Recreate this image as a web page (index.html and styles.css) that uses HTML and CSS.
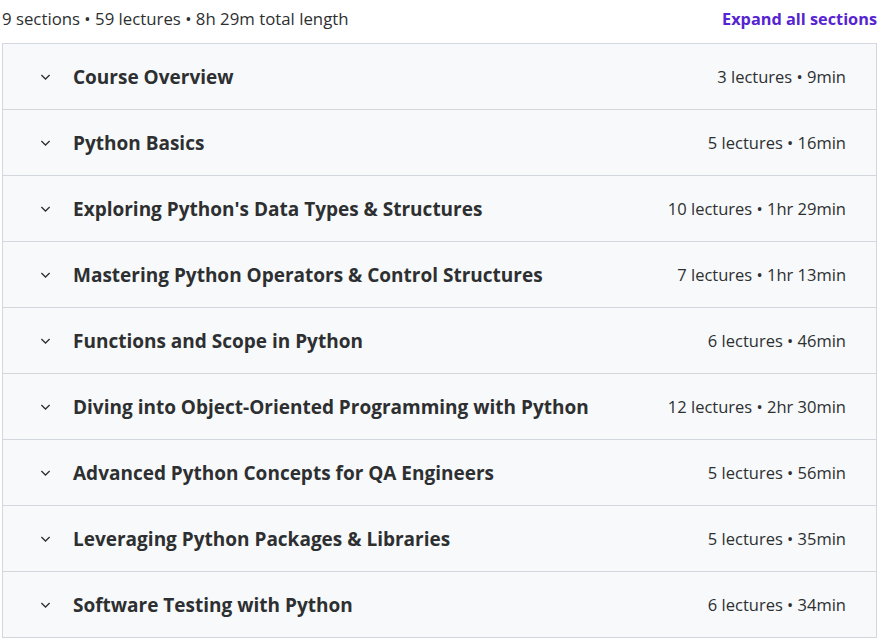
FILE: index.html
```html
<!DOCTYPE html>
<html>
<head>
<meta charset="utf-8">
<link rel="stylesheet" href="styles.css">
</head>
<body>
<div class="curriculum">
  <div class="summary">
    <span class="stats">9 sections • 59 lectures • 8h 29m total length</span>
    <span class="expand">Expand all sections</span>
  </div>
  <div class="sections">
    <div class="row"><svg class="chev" viewBox="0 0 12 8"><path d="M1.5 1.8 6 6.2 10.5 1.8"/></svg><span class="title">Course Overview</span><span class="meta">3 lectures • 9min</span></div>
    <div class="row"><svg class="chev" viewBox="0 0 12 8"><path d="M1.5 1.8 6 6.2 10.5 1.8"/></svg><span class="title">Python Basics</span><span class="meta">5 lectures • 16min</span></div>
    <div class="row"><svg class="chev" viewBox="0 0 12 8"><path d="M1.5 1.8 6 6.2 10.5 1.8"/></svg><span class="title">Exploring Python's Data Types &amp; Structures</span><span class="meta">10 lectures • 1hr 29min</span></div>
    <div class="row"><svg class="chev" viewBox="0 0 12 8"><path d="M1.5 1.8 6 6.2 10.5 1.8"/></svg><span class="title">Mastering Python Operators &amp; Control Structures</span><span class="meta">7 lectures • 1hr 13min</span></div>
    <div class="row"><svg class="chev" viewBox="0 0 12 8"><path d="M1.5 1.8 6 6.2 10.5 1.8"/></svg><span class="title">Functions and Scope in Python</span><span class="meta">6 lectures • 46min</span></div>
    <div class="row"><svg class="chev" viewBox="0 0 12 8"><path d="M1.5 1.8 6 6.2 10.5 1.8"/></svg><span class="title">Diving into Object-Oriented Programming with Python</span><span class="meta">12 lectures • 2hr 30min</span></div>
    <div class="row"><svg class="chev" viewBox="0 0 12 8"><path d="M1.5 1.8 6 6.2 10.5 1.8"/></svg><span class="title">Advanced Python Concepts for QA Engineers</span><span class="meta">5 lectures • 56min</span></div>
    <div class="row"><svg class="chev" viewBox="0 0 12 8"><path d="M1.5 1.8 6 6.2 10.5 1.8"/></svg><span class="title">Leveraging Python Packages &amp; Libraries</span><span class="meta">5 lectures • 35min</span></div>
    <div class="row"><svg class="chev" viewBox="0 0 12 8"><path d="M1.5 1.8 6 6.2 10.5 1.8"/></svg><span class="title">Software Testing with Python</span><span class="meta">6 lectures • 34min</span></div>
  </div>
</div>
</body>
</html>
```
FILE: styles.css
```css
html, body {
  margin: 0;
  padding: 0;
  background: #ffffff;
}
body {
  font-family: "Open Sans", "Noto Sans", sans-serif;
  color: #2d2f31;
}
.curriculum {
  margin: 0 2px 0 2px;
}
.summary {
  display: flex;
  justify-content: space-between;
  align-items: center;
  height: 37px;
  padding-bottom: 6px;
}
.stats {
  font-size: 16.8px;
  color: #2d2f31;
}
.expand {
  font-size: 16.3px;
  font-weight: 700;
  color: #5624d0;
}
.sections {
  border: 1px solid #d1d7dc;
  border-bottom: none;
}
.row {
  display: flex;
  align-items: center;
  height: 65px;
  background: #f7f9fa;
  border-bottom: 1px solid #d1d7dc;
  padding: 0 30px 0 37px;
}
.chev {
  width: 11px;
  height: 8px;
  flex: none;
  fill: none;
  stroke: #2d2f31;
  stroke-width: 1.4;
  margin-right: 22px;
}
.title {
  flex: 1;
  font-size: 19px;
  font-weight: 700;
  color: #2d2f31;
}
.meta {
  font-size: 16.5px;
  color: #2d2f31;
}
```
